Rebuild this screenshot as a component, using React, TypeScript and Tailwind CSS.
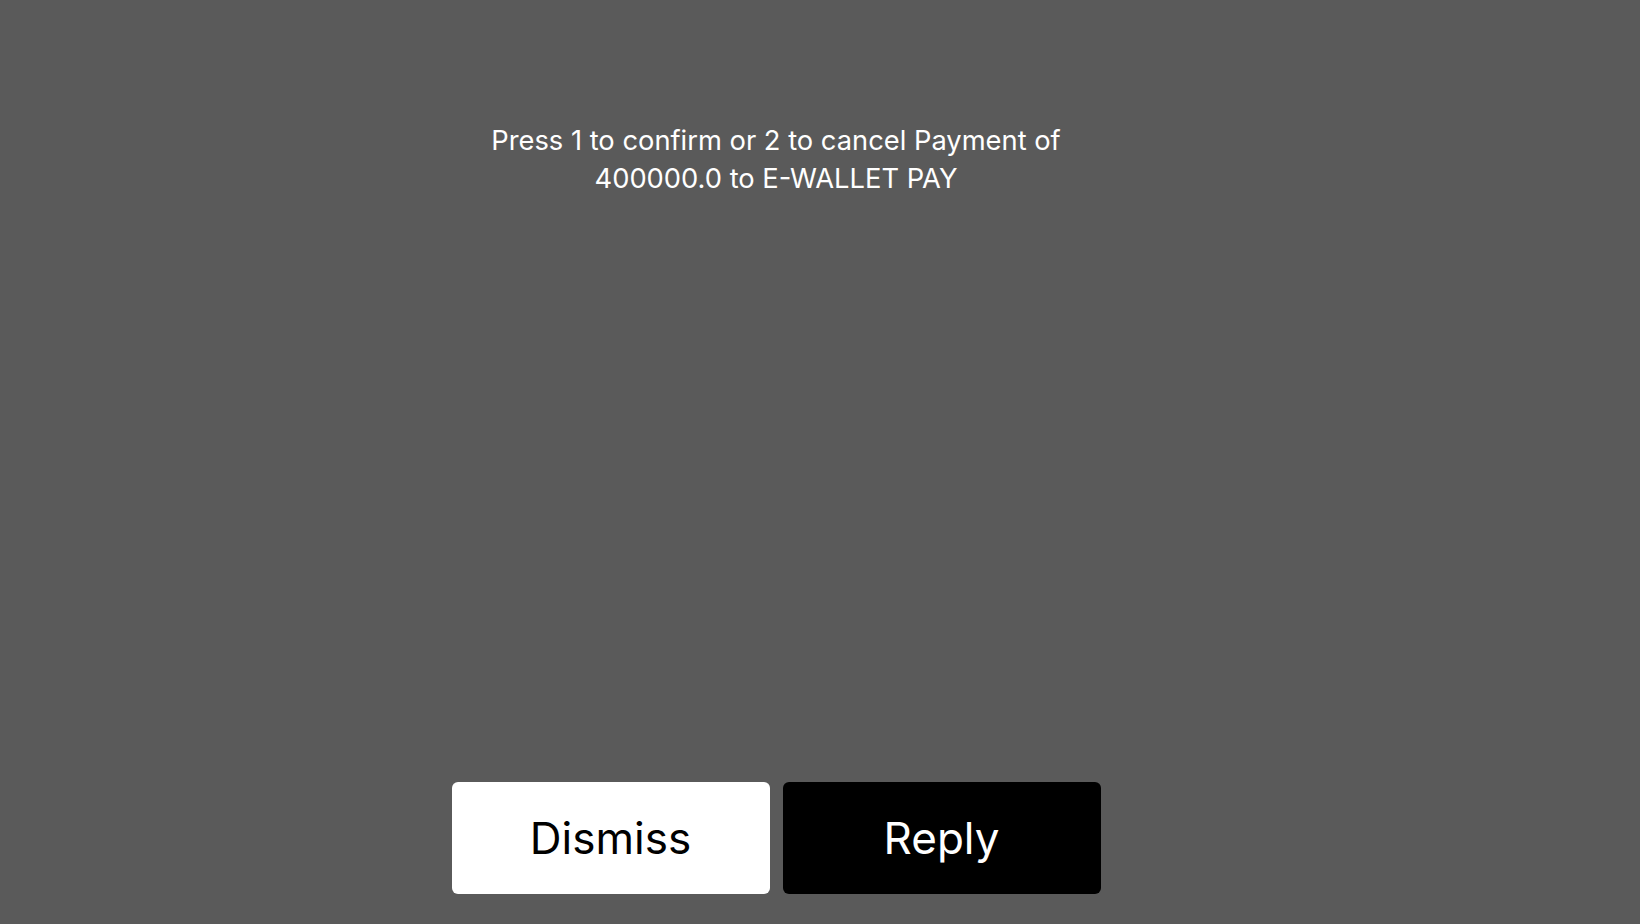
export default function App() {
  return (
    <div className="h-[924px] w-[1640px] bg-[#5a5a5a] overflow-hidden" style={{ fontFamily: 'Inter, "Noto Sans", sans-serif' }}>
      <div className="flex h-full w-[1552px] flex-col items-center">
        <p className="mt-[122px] w-[620px] text-center text-[27.3px] leading-[38px] text-white">
          Press 1 to confirm or 2 to cancel Payment of 400000.0 to E-WALLET PAY
        </p>
        <div className="mt-auto mb-[30px] flex gap-[13px]">
          <button className="flex h-[112px] w-[318px] items-center justify-center rounded-[6px] bg-white text-[44px] text-black">
            Dismiss
          </button>
          <button className="flex h-[112px] w-[318px] items-center justify-center rounded-[6px] bg-black text-[44px] text-white">
            Reply
          </button>
        </div>
      </div>
    </div>
  );
}
